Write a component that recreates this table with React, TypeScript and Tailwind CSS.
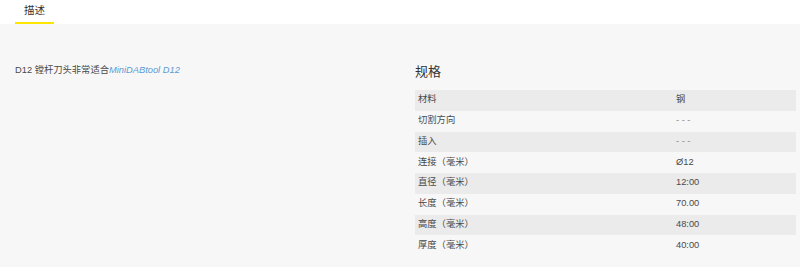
import React from "react";

const specs: [string, string][] = [
  ["材料", "钢"],
  ["切割方向", "- - -"],
  ["插入", "- - -"],
  ["连接（毫米）", "Ø12"],
  ["直径（毫米）", "12:00"],
  ["长度（毫米）", "70.00"],
  ["高度（毫米）", "48:00"],
  ["厚度（毫米）", "40:00"],
];

const font = { fontFamily: '"Liberation Sans", "Noto Sans CJK SC", sans-serif' };

export default function App() {
  return (
    <div className="w-[800px] h-[267px] bg-[#f7f7f7] text-[#4a4a4a]" style={font}>
      <div className="h-[24px] bg-white flex pl-[15px]">
        <div className="w-[39px] h-[24px] border-b-2 border-[#ffe600] flex items-center justify-center text-[10.5px] text-[#333]">
          描述
        </div>
      </div>
      <div className="flex pl-[15px] pr-[4px]">
        <div className="w-[400px] pt-[40px] text-[9.3px] leading-[13px]">
          D12 镗杆刀头非常适合<span className="italic text-[#5b9bd5]">MiniDABtool D12</span>
        </div>
        <div className="flex-1 pt-[34px]">
          <div className="h-[27px] mb-[5px] flex items-center text-[13px] text-[#333]">规格</div>
          <div className="flex flex-col">
            {specs.map(([k, v], i) => (
              <div
                key={k}
                className={
                  "h-[20.75px] flex items-center text-[9.3px] " +
                  (i % 2 === 0 ? "bg-[#ebebeb]" : "")
                }
              >
                <div className="w-[257px] pl-[3px]">{k}</div>
                <div className={"pl-[4px] " + (v === "- - -" ? "text-[#888]" : "")}>{v}</div>
              </div>
            ))}
          </div>
        </div>
      </div>
    </div>
  );
}
